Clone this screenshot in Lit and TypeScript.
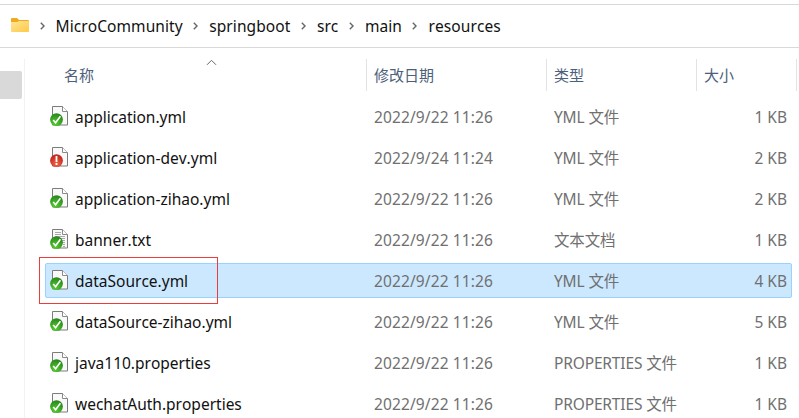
import { LitElement, html, css, svg, nothing } from "lit";
import { customElement, property } from "lit/decorators.js";
import { classMap } from "lit/directives/class-map.js";

type Status = "ok" | "changed";

interface FileEntry {
  name: string;
  date: string;
  type: string;
  size: string;
  status: Status;
  text?: boolean;
  selected?: boolean;
}

const yml = (name: string, size: string, date = "2022/9/22 11:26", status: Status = "ok"): FileEntry => ({
  name, date, type: "YML 文件", size, status,
});

const FILES: FileEntry[] = [
  yml("application.yml", "1 KB"),
  yml("application-dev.yml", "2 KB", "2022/9/24 11:24", "changed"),
  yml("application-zihao.yml", "2 KB"),
  { name: "banner.txt", date: "2022/9/22 11:26", type: "文本文档", size: "1 KB", status: "ok", text: true },
  { ...yml("dataSource.yml", "4 KB"), selected: true },
  yml("dataSource-zihao.yml", "5 KB"),
  { name: "java110.properties", date: "2022/9/22 11:26", type: "PROPERTIES 文件", size: "1 KB", status: "ok" },
  { name: "wechatAuth.properties", date: "2022/9/22 11:26", type: "PROPERTIES 文件", size: "1 KB", status: "ok" },
];

const PATH = ["MicroCommunity", "springboot", "src", "main", "resources"];

@customElement("file-icon")
class FileIcon extends LitElement {
  @property() status: Status = "ok";
  @property({ type: Boolean }) text = false;

  static styles = css`
    :host { display: block; width: 20px; height: 22px; }
    svg { display: block; }
  `;

  render() {
    return html`<svg width="20" height="22" viewBox="0 0 20 22">
      <defs>
        <radialGradient id="ok" cx=".4" cy=".8" r=".8">
          <stop offset="0" stop-color="#5ccb35" /><stop offset=".6" stop-color="#38a322" /><stop offset="1" stop-color="#27831d" />
        </radialGradient>
        <radialGradient id="changed" cx=".5" cy=".75" r=".8">
          <stop offset="0" stop-color="#ee6a4c" /><stop offset=".6" stop-color="#cf3425" /><stop offset="1" stop-color="#b0271c" />
        </radialGradient>
      </defs>
      <path d="M2.5 1.5h10l5 5v13.5h-15z" fill="#f9f9f9" stroke="#7c7c7c" />
      <path d="M12.5 1.5v5h5" fill="#fff" stroke="#8a8a8a" />
      ${this.text
        ? svg`<path d="M5 4.5h6M5 6.5h6M5 8.5h10M6 10.5h9M9 12.5h6M12 14.5h3M13 16.5h2M13 18.5h2" stroke="#aaa" />`
        : nothing}
      <circle cx="6.5" cy="14.6" r="6.4" fill="url(#${this.status})" />
      ${this.status === "ok"
        ? svg`<path d="M3.2 15l2.4 2.8 4.8-6.6" fill="none" stroke="#fff" stroke-width="1.6" />`
        : svg`<path d="M6.5 10v6M6.5 17.1v1.9" fill="none" stroke="#fff" stroke-width="1.8" />`}
    </svg>`;
  }
}

@customElement("app-root")
class AppRoot extends LitElement {
  static styles = css`
    :host {
      display: flex; flex-direction: column; box-sizing: border-box;
      width: 799px; height: 418px; overflow: hidden; padding-top: 4px;
      background: #fff; color: #111;
      font: 15.5px/20px "Noto Sans", "Noto Sans CJK SC", sans-serif;
      font-kerning: none;
    }
    svg { display: block; flex: none; }
    .crumbs {
      display: flex; align-items: center; box-sizing: border-box; flex: none;
      height: 44px; padding-left: 11px; letter-spacing: .08px;
      border-top: 1px solid #d9d9d9; border-bottom: 1px solid #d9d9d9;
    }
    .folder { margin-top: -2px; }
    .sep { margin: 0 11px 0 10.5px; }
    .body { display: flex; flex: 1; min-height: 0; }
    .side { width: 24px; padding-top: 23px; box-sizing: border-box; flex: none; }
    .thumb { width: 22px; height: 28px; background: #d9d9d9; border-radius: 0 2px 2px 0; }
    .list { flex: 1; margin-top: 11px; border-left: 1px solid #f2f2f2; }
    .head, .row { display: grid; grid-template-columns: 342px 180px 150px 100px; }
    .head { height: 32px; color: #4c607a; font-size: 15px; }
    .head > div { position: relative; box-sizing: border-box; border-right: 1px solid #e3e3e3; padding: 6px 0 0 7px; }
    .head > .first { padding-left: 39px; }
    .sort { position: absolute; left: 181px; top: 0; }
    .rows { padding-top: 5px; }
    .row { position: relative; height: 41px; align-items: center; color: #707070; }
    .row > div { padding-left: 7px; position: relative; white-space: nowrap; }
    .row > .name { display: flex; align-items: center; gap: 5px; padding-left: 25px; color: #111; }
    file-icon { margin-top: -1px; }
    .row > .date { letter-spacing: .12px; }
    .row > .type { letter-spacing: -.15px; }
    .row > .size { text-align: right; padding: 0 10px 0 0; }
    .selected::before {
      content: ""; position: absolute; left: 20px; top: 3px; width: 747px; height: 35px;
      box-sizing: border-box; background: #cce8ff; border: 1px solid #99d1ff; border-radius: 2px;
    }
    .mark {
      position: absolute; left: 14px; top: -3px; width: 179px; height: 47px;
      box-sizing: border-box; border: 1px solid #ec3d3d;
    }
  `;

  render() {
    return html`
      <div class="crumbs">
        <svg class="folder" width="18" height="16" viewBox="0 0 18 16">
          <defs><linearGradient id="f" x1="0" y1="0" x2="1" y2="1">
            <stop offset="0" stop-color="#ffe49a" /><stop offset="1" stop-color="#ffca45" />
          </linearGradient></defs>
          <path d="M0 2q0-1 1-1h5l2 2h9q1 0 1 1v5H0z" fill="#eeac1c" />
          <path d="M0 5h6.5L8 4h9q1 0 1 1v9q0 1-1 1H1q-1 0-1-1z" fill="url(#f)" />
        </svg>
        ${PATH.map((p) => html`
          <svg class="sep" width="5" height="8" viewBox="0 0 5 8">
            <path d="M.8 .8L4 4 .8 7.2" fill="none" stroke="#666" stroke-width="1.4" />
          </svg><span>${p}</span>`)}
      </div>
      <div class="body">
        <div class="side"><div class="thumb"></div></div>
        <div class="list">
          <div class="head">
            <div class="first">名称
              <svg class="sort" width="11" height="7" viewBox="0 0 11 7">
                <path d="M1 5.8L5.5 1.3 10 5.8" fill="none" stroke="#666" />
              </svg>
            </div>
            <div>修改日期</div><div>类型</div><div>大小</div>
          </div>
          <div class="rows">
            ${FILES.map((f) => html`
              <div class=${classMap({ row: true, selected: !!f.selected })}>
                <div class="name">
                  <file-icon .status=${f.status} .text=${!!f.text}></file-icon><span>${f.name}</span>
                </div>
                <div class="date">${f.date}</div>
                <div class="type">${f.type}</div>
                <div class="size">${f.size}</div>
                ${f.selected ? html`<span class="mark"></span>` : nothing}
              </div>`)}
          </div>
        </div>
      </div>`;
  }
}
